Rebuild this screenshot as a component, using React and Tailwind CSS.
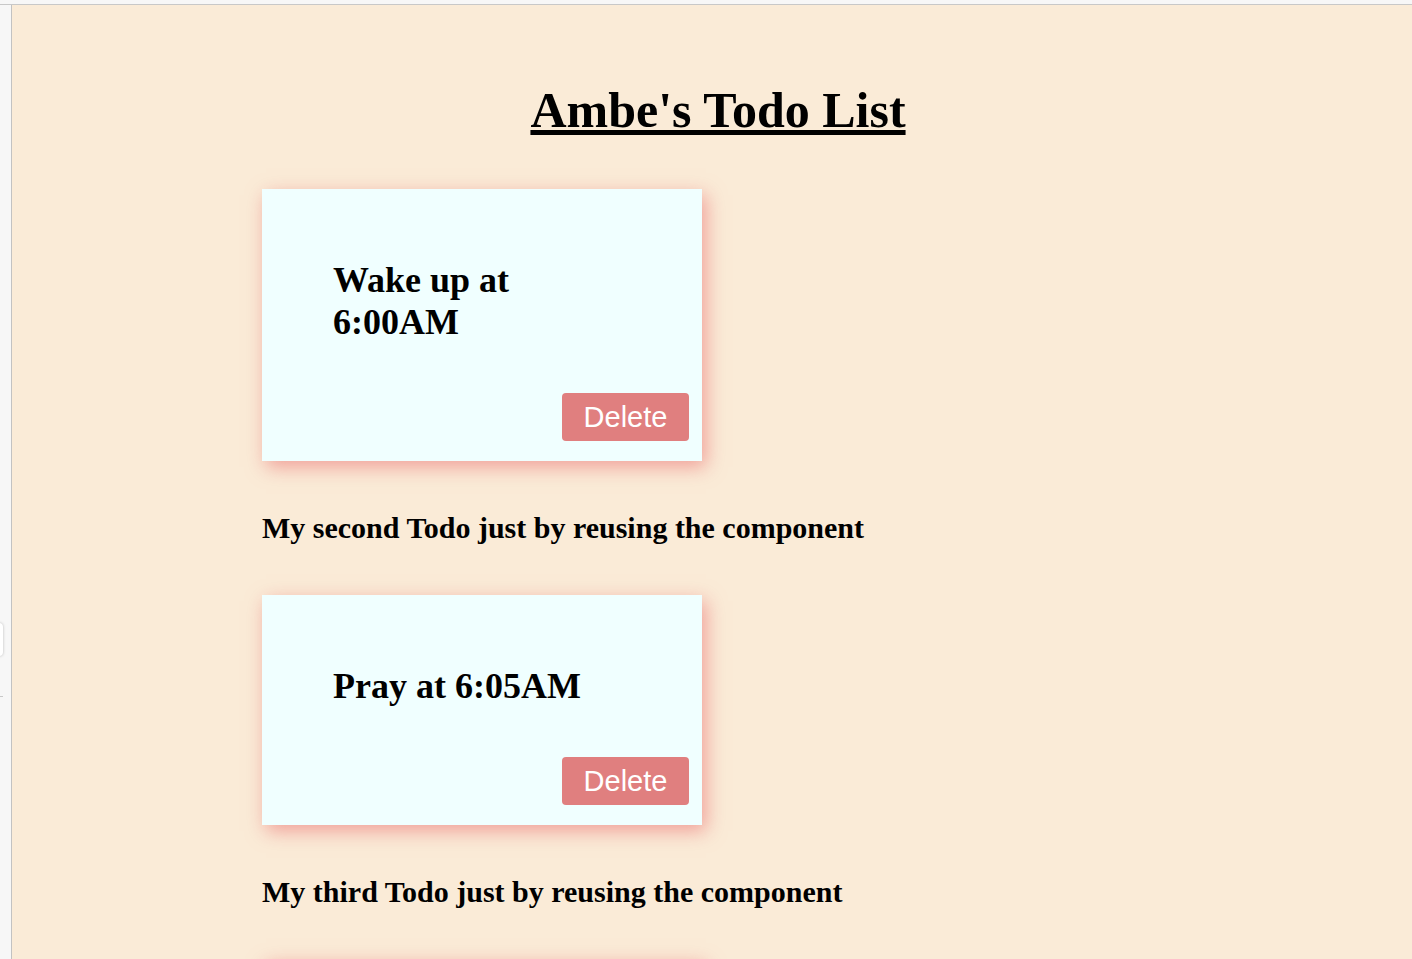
import React from "react";

const todos = [
  { id: 1, title: "Wake up at 6:00AM", note: "My second Todo just by reusing the component" },
  { id: 2, title: "Pray at 6:05AM", note: "My third Todo just by reusing the component" },
  { id: 3, title: "Go for a walk at 6:30AM", note: "" },
];

const Todo = ({ title }) => {
  return (
    <div className="w-[440px] bg-[#f0ffff] pt-[70px] pb-[20px] shadow-[4px_6px_18px_rgba(235,120,120,0.65)]">
      <h2 className="w-[341px] pl-[71px] text-[36px] leading-[42px] font-bold text-black">
        {title}
      </h2>
      <div className="mt-[50px] flex justify-end pr-[13px]">
        <button
          className="w-[127px] h-[48px] rounded-[4px] bg-[#e07f7f] text-white text-[29px] leading-none"
          style={{ fontFamily: '"Liberation Sans", Arial, sans-serif' }}
        >
          Delete
        </button>
      </div>
    </div>
  );
};

const App = () => {
  return (
    <div
      className="h-[959px] overflow-hidden bg-[#f7f7f7] flex flex-col"
      style={{ fontFamily: '"Liberation Serif", "Times New Roman", serif' }}
    >
      {/* Browser frame top strip */}
      <div className="h-[5px] shrink-0 border-b border-[#c8c8c8]" />

      <div className="flex flex-1 min-h-0">
        {/* Left strip */}
        <div className="w-[11px] shrink-0 relative">
          <div className="absolute left-[-6px] top-[618px] w-[9px] h-[33px] rounded-[4px] bg-white shadow-[0_0_3px_rgba(0,0,0,0.25)]" />
          <div className="absolute left-0 top-[691px] w-[3px] h-px bg-[#c8c8c8]" />
        </div>

        {/* Page content */}
        <main className="flex-1 border-l border-[#c2c2c2] bg-[#faebd7] overflow-hidden pt-[76px]">
          <div className="flex justify-center pl-[12px]">
            <h1 className="text-[50px] leading-[58px] font-bold underline text-black">
              Ambe's Todo List
            </h1>
          </div>

          <div className="ml-[250px] mt-[50px] flex flex-col">
            {todos.map((todo) => (
              <div key={todo.id} className="flex flex-col">
                <Todo title={todo.title} />
                {todo.note && (
                  <p className="mt-[50px] mb-[50px] text-[30px] leading-[34px] font-bold text-black">
                    {todo.note}
                  </p>
                )}
              </div>
            ))}
          </div>
        </main>
      </div>
    </div>
  );
};

export default App;
